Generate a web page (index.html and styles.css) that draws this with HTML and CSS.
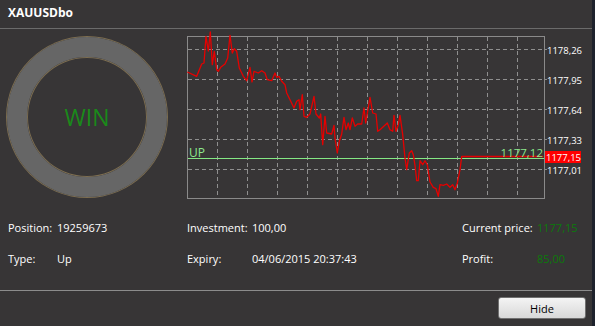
FILE: index.html
```html
<!DOCTYPE html>
<html lang="en">
<head>
    <meta charset="UTF-8">
    <title>XAUUSDbo</title>
    <link rel="stylesheet" href="styles.css">
</head>
<body>
<div class="window">
    <div class="title">XAUUSDbo</div>

    <div class="main">
        <!-- resultado de la opcion -->
        <div class="ring"><span class="ring-text">WIN</span></div>

        <!-- grafico del precio -->
        <svg class="chart" width="412" height="171" viewBox="180 29 412 171">
            <g class="grid">
                <line x1="217.5" y1="37" x2="217.5" y2="198"/>
                <line x1="247.5" y1="37" x2="247.5" y2="198"/>
                <line x1="277.5" y1="37" x2="277.5" y2="198"/>
                <line x1="307.5" y1="37" x2="307.5" y2="198"/>
                <line x1="337.5" y1="37" x2="337.5" y2="198"/>
                <line x1="367.5" y1="37" x2="367.5" y2="198"/>
                <line x1="397.5" y1="37" x2="397.5" y2="198"/>
                <line x1="427.5" y1="37" x2="427.5" y2="198"/>
                <line x1="457.5" y1="37" x2="457.5" y2="198"/>
                <line x1="487.5" y1="37" x2="487.5" y2="198"/>
                <line x1="517.5" y1="37" x2="517.5" y2="198"/>
                <line x1="188" y1="49.5" x2="544" y2="49.5"/>
                <line x1="188" y1="79.5" x2="544" y2="79.5"/>
                <line x1="188" y1="109.5" x2="544" y2="109.5"/>
                <line x1="188" y1="139.5" x2="544" y2="139.5"/>
                <line x1="188" y1="169.5" x2="544" y2="169.5"/>
            </g>
            <rect class="frame" x="187.5" y="36.5" width="357" height="162"/>
            <g class="ticks">
                <line x1="545" y1="49.5" x2="547" y2="49.5"/>
                <line x1="545" y1="79.5" x2="547" y2="79.5"/>
                <line x1="545" y1="109.5" x2="547" y2="109.5"/>
                <line x1="545" y1="139.5" x2="547" y2="139.5"/>
                <line x1="545" y1="169.5" x2="547" y2="169.5"/>
            </g>
            <g class="axis">
                <text x="547" y="53.5">1178,26</text>
                <text x="547" y="83.5">1177,95</text>
                <text x="547" y="113.5">1177,64</text>
                <text x="547" y="143.5">1177,33</text>
                <text x="547" y="173.5">1177,01</text>
            </g>
            <line class="strike" x1="188" y1="158.5" x2="544" y2="158.5"/>
            <text class="strike-label" x="189" y="156.5">UP</text>
            <polyline class="price" points="187.3,72 196.7,76.3 201.7,64 204,63 206,36.3 208.3,51 210.3,32 212.3,64.7 214.3,51.3 216.7,69.7 218.3,71.3 220.7,67.3 225,64 227.7,58 230,35.3 232.3,53 234.3,48.7 236.7,51.3 239.3,68 243.3,76.3 246.7,80.7 250,67.3 252,82 254,71.3 258.3,73 261.7,70.7 265,73 267.3,79.7 271.7,80.7 275,73 276.7,77.3 279,76.3 281.7,81.3 285,84.7 286.7,93 290,99.7 294,108 296.7,101.3 299,99.7 300,109.7 302.3,94.7 304,116.3 306.7,117.3 310,114 314,96.3 316,114 319.3,118 320.7,114 322.7,144.7 325,116.3 326.7,133 331.7,134 334,125.3 335,138 337.3,153 339.3,141.3 341.7,134 344,117.3 346,129.7 348.3,123 350,129.7 352.3,118 355,126.3 357.7,124 361.7,124 364,108 365.7,123 370,97.3 372.7,113 376,114 377.7,131.3 380,129.7 387.3,123 390,129.7 392.7,131.3 394,115.3 396,131.3 398.3,124.7 400,115.3 402.7,134.7 405,158 406.7,169.7 409.3,153 411.7,150.7 413.3,154.7 415,165.3 416.7,180.7 418.3,180.7 420,160.7 422.7,164.7 425,160.7 427.3,164.7 430,182 433.3,187.3 436,188.7 438.3,196.3 440,184.7 443.3,185.3 446.7,184 450,187.3 452.7,184.7 455,189.7 457.3,183 460,169.7 461.7,156.5 543.3,156.5"/>
            <text class="strike-price" x="543" y="157">1177,12</text>
            <rect class="last-box" x="545" y="151" width="36" height="12"/>
            <text class="last-text" x="546" y="160.5">1177,15</text>
        </svg>
    </div>

    <div class="info">
        <span>Position:</span><span>19259673</span>
        <span>Investment:</span><span>100,00</span>
        <span>Current price:</span><span class="green">1177,15</span>

        <span>Type:</span><span>Up</span>
        <span>Expiry:</span><span>04/06/2015 20:37:43</span>
        <span>Profit:</span><span class="green">85,00</span>
    </div>

    <div class="footer">
        <button class="btn">Hide</button>
    </div>
</div>
</body>
</html>
```

FILE: styles.css
```css
html, body {
    margin: 0;
    padding: 0;
    background-color: #373536;
}
body {
    font-family: "Open Sans", Arial, sans-serif;
    font-size: 11px;
    color: #ffffff;
}
.window {
    width: 592px;
    height: 326px;
    border-right: 3px solid #1e222c;
    background-color: #373536;
}
.title {
    height: 28px;
    line-height: 26px;
    padding-left: 8px;
    font-size: 12px;
    font-weight: bold;
    border-bottom: 1px solid #6b6b6b;
}
.main {
    display: flex;
    height: 171px;
}
.ring {
    width: 120px;
    height: 120px;
    margin: 8px 13px 0 7px;
    border: 20px solid #666666;
    border-radius: 50%;
    box-shadow: 0 0 0 1px #7c6d50, inset 0 0 0 1px #7c6d50;
    display: flex;
    align-items: center;
    justify-content: center;
}
.ring-text {
    font-size: 23px;
    color: #1a8a1a;
    line-height: 1;
}
.chart {
    display: block;
}
.grid line {
    stroke: #8f8f8f;
    stroke-width: 1;
    stroke-dasharray: 4 3;
}
.frame {
    fill: none;
    stroke: #8a8a8a;
    stroke-width: 1;
}
.ticks line {
    stroke: #8a8a8a;
    stroke-width: 1;
}
.axis text {
    font-size: 9.5px;
    fill: #ffffff;
}
.strike {
    stroke: #84e884;
    stroke-width: 1;
}
.strike-label {
    font-size: 12px;
    fill: #8ce88c;
}
.price {
    fill: none;
    stroke: #e60000;
    stroke-width: 1.3;
    stroke-linejoin: round;
}
.strike-price {
    font-size: 11.5px;
    fill: #8ce88c;
    text-anchor: end;
}
.last-box {
    fill: #ff0000;
}
.last-text {
    font-size: 9.5px;
    fill: #ffffff;
}
.info {
    display: grid;
    grid-template-columns: 49px 130px 65px 210px 75px auto;
    row-gap: 15px;
    padding: 20px 0 23px 8px;
    height: 47px;
    line-height: 16px;
    border-bottom: 1px solid #8c8c8c;
}
.green {
    color: #0b7a0b;
}
.footer {
    display: flex;
    justify-content: flex-end;
    padding: 6px 6px 0 0;
}
.btn {
    width: 88px;
    height: 22px;
    font-family: "Open Sans", Arial, sans-serif;
    font-size: 11px;
    color: #000000;
    background: linear-gradient(#f4f4f4, #e6e6e6 50%, #d8d8d8);
    border: 1px solid #707070;
    border-radius: 3px;
    padding: 0;
}
```
